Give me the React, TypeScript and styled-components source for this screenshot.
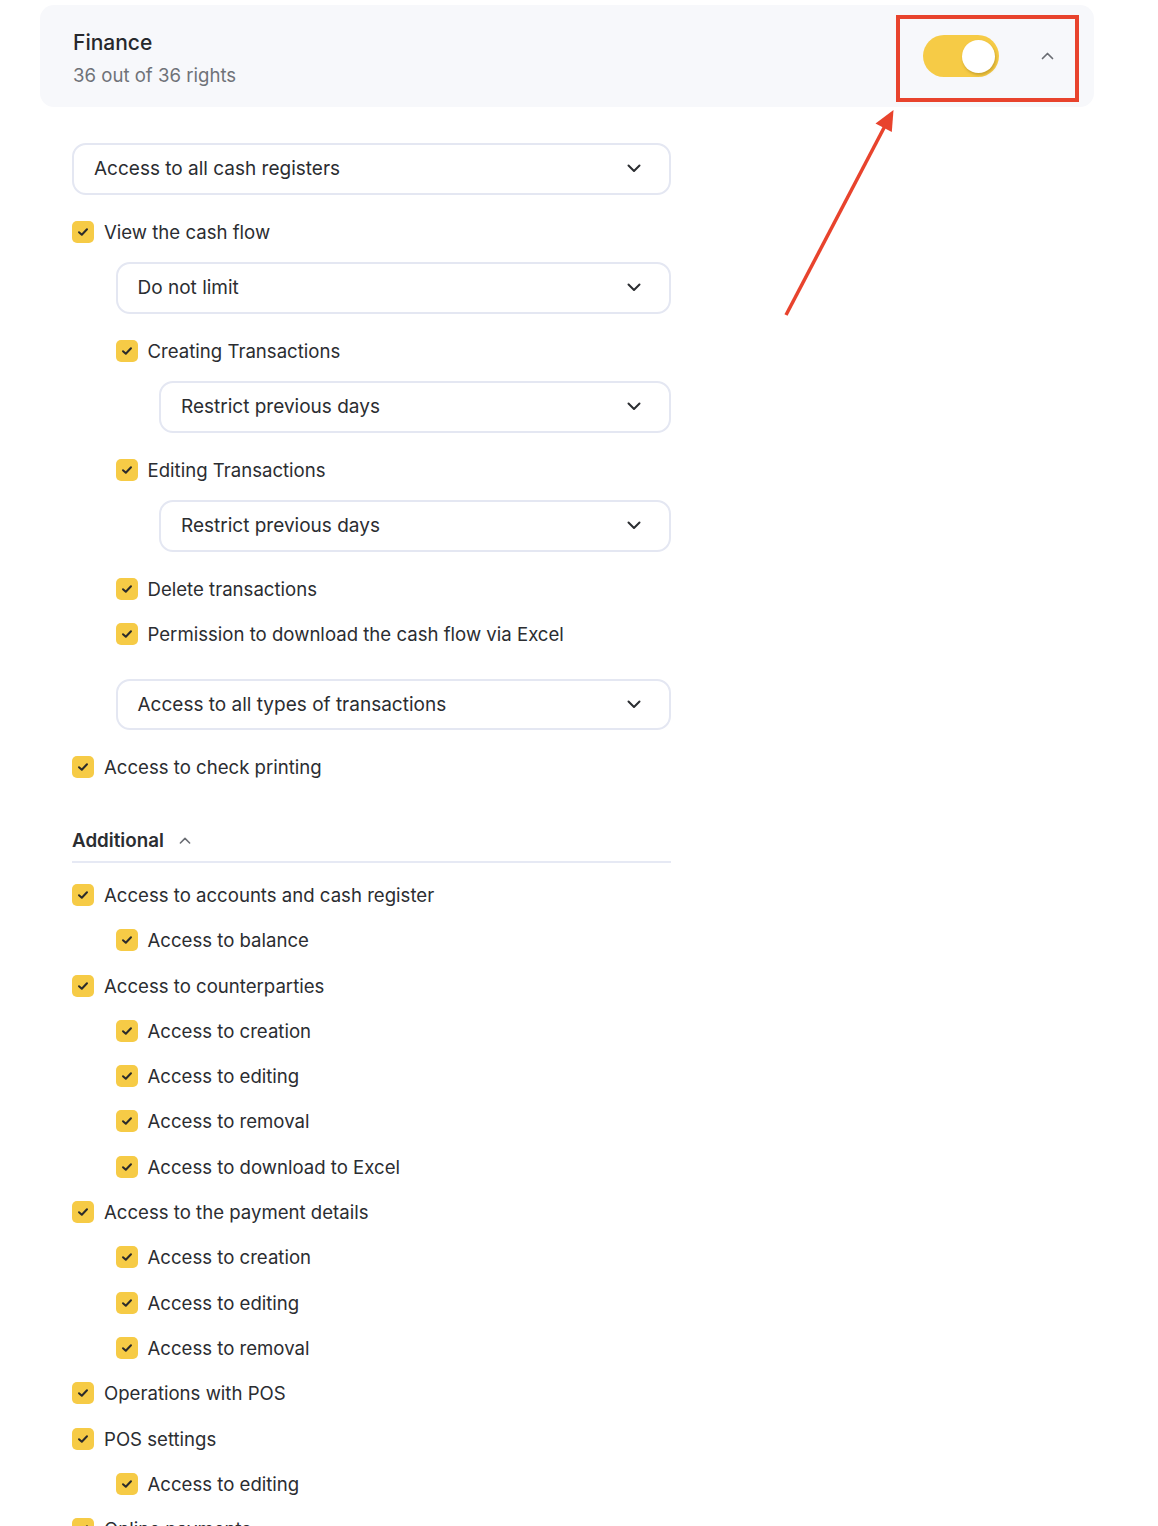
import React from "react";
import styled, { createGlobalStyle } from "styled-components";

const GlobalStyle = createGlobalStyle`
  html, body {
    margin: 0;
    padding: 0;
    background: #ffffff;
    overflow: hidden;
  }
  body {
    font-family: Inter, "Noto Sans", "Liberation Sans", sans-serif;
    color: #2b2d31;
    -webkit-font-smoothing: antialiased;
  }
`;

const Page = styled.div`
  position: relative;
  width: 1158px;
  height: 1526px;
  overflow: hidden;
  padding-top: 5px;
  box-sizing: border-box;
`;

const Card = styled.div`
  margin-left: 40px;
  width: 1054px;
  height: 102px;
  box-sizing: border-box;
  border-radius: 14px;
  background: #f7f8fb;
  display: flex;
  align-items: center;
  justify-content: space-between;
  padding: 0 40px 0 33px;
`;

const CardText = styled.div`
  display: flex;
  flex-direction: column;
  gap: 9px;
  align-self: flex-start;
  padding-top: 26px;
`;

const Title = styled.div`
  font-size: 21px;
  line-height: 24px;
  font-weight: 500;
  color: #26282c;
`;

const Subtitle = styled.div`
  font-size: 18.6px;
  line-height: 22px;
  color: #6f7278;
`;

const Controls = styled.div`
  display: flex;
  align-items: center;
  gap: 42px;
`;

const Toggle = styled.div`
  width: 76px;
  height: 42px;
  border-radius: 21px;
  background: #f6cb46;
  display: flex;
  align-items: center;
  justify-content: flex-end;
  padding: 0 4px;
  box-sizing: border-box;
`;

const Knob = styled.div`
  width: 33px;
  height: 33px;
  border-radius: 50%;
  background: #ffffff;
  box-shadow: 1px 2px 3px rgba(120, 90, 0, 0.35);
`;

const IconWrap = styled.span<{ $color?: string }>`
  display: inline-flex;
  align-items: center;
  justify-content: center;
  color: ${(p) => p.$color || "#2b2d31"};
`;

const Body = styled.div`
  margin: 36px 0 0 72px;
  width: 599px;
  display: flex;
  flex-direction: column;
`;

const Stack = styled.div`
  display: flex;
  flex-direction: column;
  gap: 21px;
`;

const Children = styled.div`
  margin-top: 18.5px;
  padding-left: 43.5px;
  display: flex;
  flex-direction: column;
  gap: 21px;
`;

const SelectBox = styled.div<{ $extraTop?: number }>`
  height: 51.5px;
  box-sizing: border-box;
  border: 2px solid #e4e7f2;
  border-radius: 14px;
  background: #ffffff;
  display: flex;
  align-items: center;
  justify-content: space-between;
  padding: 0 28px 0 20px;
  font-size: 19px;
  color: #2b2d31;
  margin-bottom: 4px;
  margin-top: ${(p) => p.$extraTop || 0}px;
`;

const Row = styled.div`
  display: flex;
  align-items: center;
  gap: 10px;
  height: 24px;
  font-size: 18.6px;
  line-height: 24px;
  color: #2b2d31;
  white-space: nowrap;
`;

const Box = styled.span`
  width: 22px;
  height: 22px;
  border-radius: 5px;
  background: #f6cb46;
  display: inline-flex;
  align-items: center;
  justify-content: center;
  flex-shrink: 0;
`;

const SectionHeader = styled.div`
  margin-top: 50px;
  padding-bottom: 8px;
  border-bottom: 2px solid #e6e9f4;
  display: flex;
  align-items: center;
  gap: 15px;
  font-size: 18.8px;
  line-height: 24px;
  font-weight: 600;
  color: #2b2d31;
`;

const AdditionalList = styled.div`
  margin-top: 20px;
  display: flex;
  flex-direction: column;
  gap: 21.3px;
`;

const Indent = styled.div<{ $level: number }>`
  padding-left: ${(p) => p.$level * 43.5}px;
`;

const Highlight = styled.div`
  position: absolute;
  left: 896px;
  top: 15px;
  width: 183px;
  height: 87px;
  box-sizing: border-box;
  border: 4px solid #e8432d;
`;

const ArrowSvg = styled.svg`
  position: absolute;
  left: 0;
  top: 0;
  pointer-events: none;
`;

const ChevronDown = () => (
  <svg width="14" height="9" viewBox="0 0 14 9" fill="none">
    <path d="M1.5 1.5 L7 7 L12.5 1.5" stroke="currentColor" strokeWidth="2" strokeLinecap="round" strokeLinejoin="round" />
  </svg>
);

const ChevronUp = ({ size = 13 }: { size?: number }) => (
  <svg width={size} height={size * 0.62} viewBox="0 0 13 8" fill="none">
    <path d="M1.5 6.5 L6.5 1.5 L11.5 6.5" stroke="currentColor" strokeWidth="1.7" strokeLinecap="round" strokeLinejoin="round" />
  </svg>
);

const Check = ({ label }: { label: string }) => (
  <Row>
    <Box>
      <svg width="12" height="10" viewBox="0 0 12 10" fill="none">
        <path d="M2 5.2 L4.8 7.8 L10 2.2" stroke="#2b2b2b" strokeWidth="2" strokeLinecap="round" strokeLinejoin="round" />
      </svg>
    </Box>
    <span>{label}</span>
  </Row>
);

const Select = ({ label, extraTop }: { label: string; extraTop?: number }) => (
  <SelectBox $extraTop={extraTop}>
    <span>{label}</span>
    <IconWrap>
      <ChevronDown />
    </IconWrap>
  </SelectBox>
);

const additional: { label: string; level: number }[] = [
  { label: "Access to accounts and cash register", level: 0 },
  { label: "Access to balance", level: 1 },
  { label: "Access to counterparties", level: 0 },
  { label: "Access to creation", level: 1 },
  { label: "Access to editing", level: 1 },
  { label: "Access to removal", level: 1 },
  { label: "Access to download to Excel", level: 1 },
  { label: "Access to the payment details", level: 0 },
  { label: "Access to creation", level: 1 },
  { label: "Access to editing", level: 1 },
  { label: "Access to removal", level: 1 },
  { label: "Operations with POS", level: 0 },
  { label: "POS settings", level: 0 },
  { label: "Access to editing", level: 1 },
  { label: "Online payments", level: 0 },
];

export default function App() {
  return (
    <>
      <GlobalStyle />
      <Page>
        <Card>
          <CardText>
            <Title>Finance</Title>
            <Subtitle>36 out of 36 rights</Subtitle>
          </CardText>
          <Controls>
            <Toggle>
              <Knob />
            </Toggle>
            <IconWrap $color="#6a6d73">
              <ChevronUp />
            </IconWrap>
          </Controls>
        </Card>

        <Body>
          <Stack>
            <Select label="Access to all cash registers" />
            <div>
              <Check label="View the cash flow" />
              <Children>
                <Select label="Do not limit" />
                <div>
                  <Check label="Creating Transactions" />
                  <Children>
                    <Select label="Restrict previous days" />
                  </Children>
                </div>
                <div>
                  <Check label="Editing Transactions" />
                  <Children>
                    <Select label="Restrict previous days" />
                  </Children>
                </div>
                <Check label="Delete transactions" />
                <Check label="Permission to download the cash flow via Excel" />
                <Select label="Access to all types of transactions" extraTop={12} />
              </Children>
            </div>
            <Check label="Access to check printing" />
          </Stack>

          <SectionHeader>
            <span>Additional</span>
            <IconWrap $color="#6a6d73">
              <ChevronUp size={12} />
            </IconWrap>
          </SectionHeader>

          <AdditionalList>
            {additional.map((item, i) => (
              <Indent key={i} $level={item.level}>
                <Check label={item.label} />
              </Indent>
            ))}
          </AdditionalList>
        </Body>

        <Highlight />
        <ArrowSvg width="1158" height="400" viewBox="0 0 1158 400">
          <line x1="786" y1="315" x2="886" y2="124" stroke="#e8432d" strokeWidth="3.5" />
          <polygon points="893.5,110 875.5,123.5 891.8,132" fill="#e8432d" />
        </ArrowSvg>
      </Page>
    </>
  );
}
